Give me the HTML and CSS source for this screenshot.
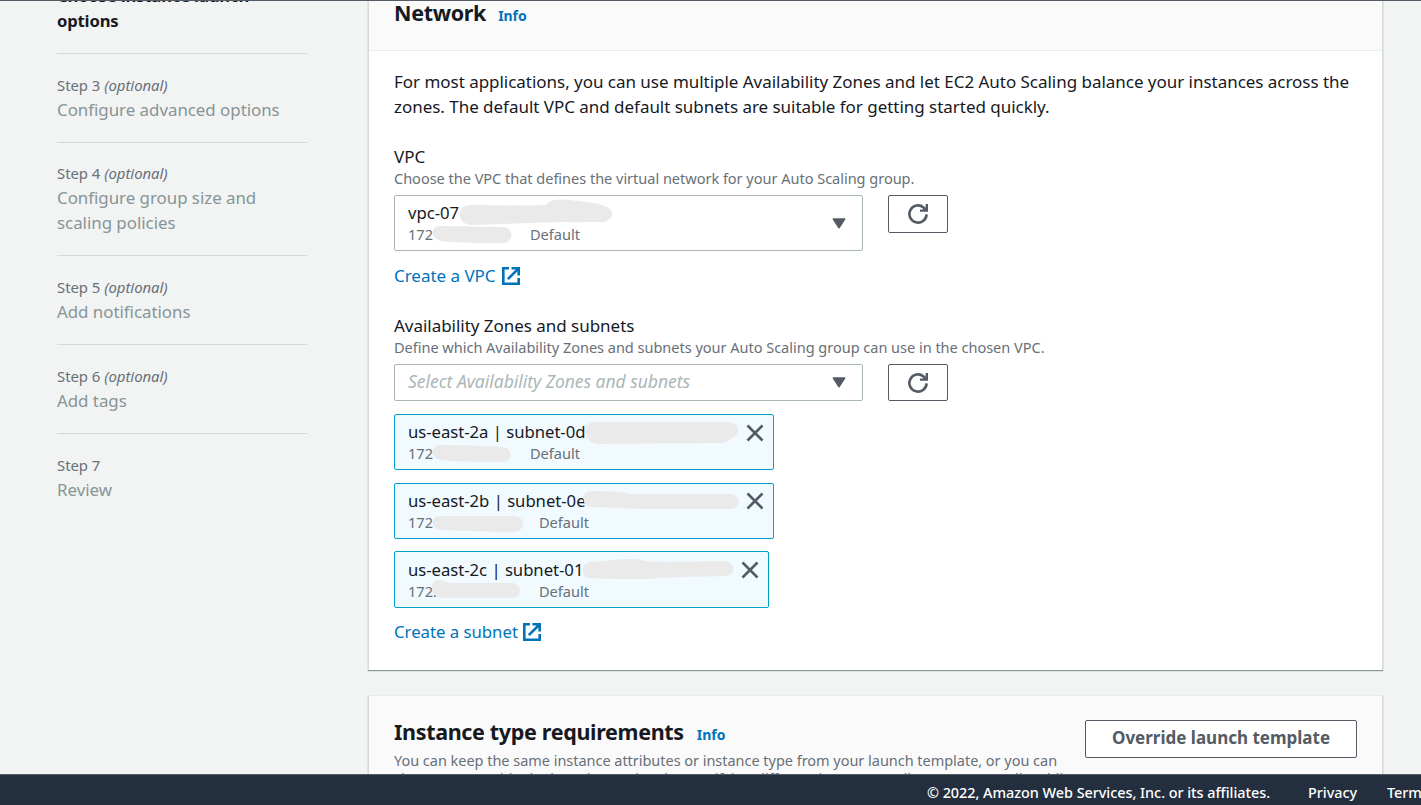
FILE: index.html
```html
<!DOCTYPE html>
<html lang="en">
<head>
<meta charset="utf-8">
<title>Create Auto Scaling group</title>
<link rel="stylesheet" href="styles.css">
</head>
<body>
<svg class="defs" aria-hidden="true">
  <symbol id="refresh" viewBox="0 0 20 20"><path d="M18.6 10.4A8.6 8.6 0 1 1 15.5 3.4L17.5 5.4" fill="none" stroke="currentColor" stroke-width="2.6"/><path d="M18.8 0v6.6h-6.8" fill="none" stroke="currentColor" stroke-width="2.4"/><path d="M15 3.5L19 4v3h-3.5z" fill="currentColor"/></symbol>
  <symbol id="external" viewBox="0 0 18 18"><path d="M7 1.3H1.3v15.4h15.4V11M9.5 1.3h7.2V8.5M16.5 1.5L5.8 12.2" fill="none" stroke="currentColor" stroke-width="2.6"/></symbol>
  <symbol id="close" viewBox="0 0 18 18"><path d="M1.5 1.5l15 15M16.5 1.5l-15 15" fill="none" stroke="currentColor" stroke-width="2.6"/></symbol>
  <symbol id="caret" viewBox="0 0 14 11"><path d="M1.3 1h11.4L7 9.8z" fill="currentColor" stroke="currentColor" stroke-width="1.4" stroke-linejoin="round"/></symbol>
</svg>
<div class="page">
  <nav class="steps">
    <div class="step active"><div class="step-name">Choose instance launch<br>options</div></div>
    <div class="step"><div class="step-no">Step 3 <i>(optional)</i></div><div class="step-name">Configure advanced options</div></div>
    <div class="step"><div class="step-no">Step 4 <i>(optional)</i></div><div class="step-name">Configure group size and<br>scaling policies</div></div>
    <div class="step"><div class="step-no">Step 5 <i>(optional)</i></div><div class="step-name">Add notifications</div></div>
    <div class="step"><div class="step-no">Step 6 <i>(optional)</i></div><div class="step-name">Add tags</div></div>
    <div class="step"><div class="step-no">Step 7</div><div class="step-name">Review</div></div>
  </nav>
  <main class="content">
    <section class="card network">
      <header class="card-head"><h2>Network</h2><a class="info">Info</a></header>
      <div class="card-body">
        <p class="intro">For most applications, you can use multiple Availability Zones and let EC2 Auto Scaling balance your instances across the<br>zones. The default VPC and default subnets are suitable for getting started quickly.</p>
        <div class="label">VPC</div>
        <div class="hint">Choose the VPC that defines the virtual network for your Auto Scaling group.</div>
        <div class="field">
          <div class="select tall">
            <div class="option"><div class="main-text">vpc-07</div><div class="sub"><span class="cidr short">172</span><span>Default</span></div></div>
            <svg class="caret"><use href="#caret"/></svg>
            <svg class="mask" viewBox="0 0 380 56"><path d="M76 10C100 10 130 11 152 10C156 4 166 4 176 5C194 7 205 8 213 12C222 16 219 27 207 27H192C180 28 174 27 166 27L78 30C62 30 62 10 76 10ZM46 31C70 31 90 32 110 32C120 33 120 48 109 48C90 48 65 48 47 46C36 44 36 31 46 31Z" fill="#eaeaea"/></svg>
          </div>
          <button class="refresh tall-btn"><svg><use href="#refresh"/></svg></button>
        </div>
        <a class="link link-vpc">Create a VPC<svg><use href="#external"/></svg></a>
        <div class="label">Availability Zones and subnets</div>
        <div class="hint">Define which Availability Zones and subnets your Auto Scaling group can use in the chosen VPC.</div>
        <div class="field">
          <div class="select"><span class="placeholder">Select Availability Zones and subnets</span><svg class="caret"><use href="#caret"/></svg></div>
          <button class="refresh"><svg><use href="#refresh"/></svg></button>
        </div>
        <div class="tokens">
          <div class="token">
            <div class="option"><div class="main-text">us-east-2a | subnet-0d</div><div class="sub"><span class="cidr short">172</span><span>Default</span></div></div>
            <svg class="close"><use href="#close"/></svg>
            <svg class="mask" viewBox="0 0 380 56"><path d="M200 8H334C347 8 347 24 337 24C333 30 326 29 316 29L204 30C188 29 189 8 200 8ZM46 31C70 31 90 32 109 33C119 34 119 48 108 48C90 48 65 48 47 46C36 44 36 31 46 31Z" fill="#eaeaea"/></svg>
          </div>
          <div class="token">
            <div class="option"><div class="main-text">us-east-2b | subnet-0e</div><div class="sub"><span class="cidr">172</span><span>Default</span></div></div>
            <svg class="close close-b"><use href="#close"/></svg>
            <svg class="mask" viewBox="0 0 380 56"><path d="M197 8C210 8 228 8 236 11H336C348 12 347 26 336 26H242C225 25 210 24 197 24C187 23 187 8 197 8ZM47 33H121C132 34 131 48 121 49C100 50 90 48 80 48L47 47C36 46 36 33 47 33Z" fill="#eaeaea"/></svg>
          </div>
          <div class="token token-c">
            <div class="option"><div class="main-text">us-east-2c | subnet-01</div><div class="sub"><span class="cidr">172.</span><span>Default</span></div></div>
            <svg class="close"><use href="#close"/></svg>
            <svg class="mask" viewBox="0 0 380 56"><path d="M197 11C220 9 245 6 250 10C275 12 300 10 331 10C342 12 342 25 331 25C300 26 270 26 255 28C230 28 210 28 194 27C185 22 188 12 197 11ZM44 29C49 29 52 31 57 32H118C129 33 128 47 118 47H47C35 45 36 30 44 29Z" fill="#eaeaea"/></svg>
          </div>
        </div>
        <a class="link link-subnet">Create a subnet<svg><use href="#external"/></svg></a>
      </div>
    </section>
    <section class="card instance">
      <div class="instance-copy">
        <div class="title-row"><h2>Instance type requirements</h2><a class="info">Info</a></div>
        <p class="description">You can keep the same instance attributes or instance type from your launch template, or you can<br>choose to override the launch template by specifying different instance attributes or manually adding<br>instance types.</p>
      </div>
      <button class="override">Override launch template</button>
    </section>
  </main>
  <footer class="footer"><span class="copyright">© 2022, Amazon Web Services, Inc. or its affiliates.</span><span class="privacy">Privacy</span><span>Terms</span></footer>
</div>
</body>
</html>
```
FILE: styles.css
```css
* { box-sizing: border-box; }
body { margin: 0; background: #f2f3f3; color: #16191f; font-family: "Noto Sans", "Open Sans", sans-serif; font-size: 17px; line-height: 25px; letter-spacing: -0.03px; }
.defs { display: none; }
.page { position: relative; height: 805px; overflow: hidden; border-top: 1px solid #545b64; display: flex; }
h2, p { margin: 0; }
.steps { width: 368px; flex: none; padding-left: 57px; margin-top: -18px; }
.step { width: 250px; border-bottom: 1px solid #d5dbdb; padding: 21px 0 20px; white-space: nowrap; }
.step:nth-child(3) { padding-top: 20px; }
.step.active { padding: 0 0 20px; }
.step:last-child { border: 0; }
.step-no { font-size: 14.9px; line-height: 20px; margin-bottom: 2px; color: #687078; }
.step-name { color: #879596; font-size: 16.9px; }
.step.active .step-name { color: #16191f; font-weight: 700; font-size: 16.6px; letter-spacing: -0.15px; }
.content { width: 1015px; flex: none; }
.card { border: 1px solid #d5dbdb; border-top-color: #eaeded; border-bottom: 0; box-shadow: 0 1px 1px #879596; background: #fff; white-space: nowrap; }
.network { height: 670px; margin-top: -1px; border-top: 0; }
.card-head { height: 51px; background: #fafafa; border-bottom: 1px solid #eaeded; padding-left: 25px; display: flex; align-items: baseline; }
.card-head h2, .card-head .info { margin-top: -1px; }
h2 { font-size: 21.5px; line-height: 28px; font-weight: 700; letter-spacing: -0.33px; }
.info { color: #0073bb; font-size: 14px; font-weight: 700; margin-left: 13px; }
.card-head .info { margin-left: 12px; }
.card-body { padding: 18px 25px 0; }
.intro { margin-bottom: 25px; }
.label { line-height: 25px; }
.hint { font-size: 14.55px; line-height: 18px; color: #687078; }
.field { display: flex; gap: 25px; margin-top: 8px; align-items: flex-start; }
.select { width: 469px; height: 37px; border: 1px solid #aab7b8; border-radius: 2px; position: relative; display: flex; align-items: center; justify-content: space-between; padding: 0 16px 0 13px; }
.select.tall { height: 56px; }
.placeholder { font-style: italic; color: #aab7b8; font-size: 17.5px; margin-top: -2px; }
.caret { width: 14px; height: 11px; color: #545b64; }
.main-text { line-height: 24px; font-size: 16.7px; }
.sub { font-size: 14.6px; line-height: 18px; padding-bottom: 2px; color: #687078; display: flex; }
.cidr { width: 131px; }
.cidr.short { width: 122px; }
.mask { position: absolute; left: -1px; top: -1px; width: 380px; height: 56px; }
.refresh { width: 60px; height: 37px; border: 1px solid #545b64; border-radius: 2px; background: #fff; color: #545b64; padding: 0; display: flex; align-items: center; justify-content: center; }
.refresh.tall-btn { height: 38px; }
.refresh svg { width: 20px; height: 20px; }
.link { display: flex; align-items: center; gap: 6px; color: #0073bb; }
.link svg { width: 18px; height: 18px; }
.link-vpc { margin: 12px 0 25px; }
.tokens { display: flex; flex-direction: column; gap: 13px; margin-top: 13px; }
.token { position: relative; width: 380px; height: 56px; border: 1px solid #00a1c9; border-radius: 2px; background: #f1faff; padding: 5px 9px 0 13px; display: flex; justify-content: space-between; }
.token-c { width: 375px; height: 57px; margin-top: -1px; padding-top: 6px; }
.close { width: 18px; height: 18px; color: #545b64; margin-top: 4px; }
.close-b, .token-c .close { margin-top: 3px; }
.link-subnet { margin-top: 11px; font-size: 16.8px; gap: 5px; }
.instance { margin-top: 25px; height: 200px; background: #fafafa; padding: 22px 25px 0; display: flex; justify-content: space-between; }
.instance-copy { width: 680px; }
.title-row { display: flex; align-items: baseline; }
.description { font-size: 14.5px; line-height: 18px; color: #687078; margin-top: 4px; }
.override { width: 272px; height: 38px; flex: none; margin-top: 2px; border: 1px solid #545b64; border-radius: 2px; background: #fff; color: #545b64; font: 700 17px/34px "Noto Sans", sans-serif; padding: 0 0 2px; }
.footer { position: absolute; left: 0; right: 0; top: 773px; height: 31px; border-top: 1px solid #545b64; background: #232f3e; color: #fff; font-size: 14.4px; line-height: 36px; font-weight: 500; padding-left: 927px; display: flex; white-space: nowrap; overflow: hidden; }
.copyright { width: 381px; flex: none; }
.privacy { width: 79px; flex: none; }
```
